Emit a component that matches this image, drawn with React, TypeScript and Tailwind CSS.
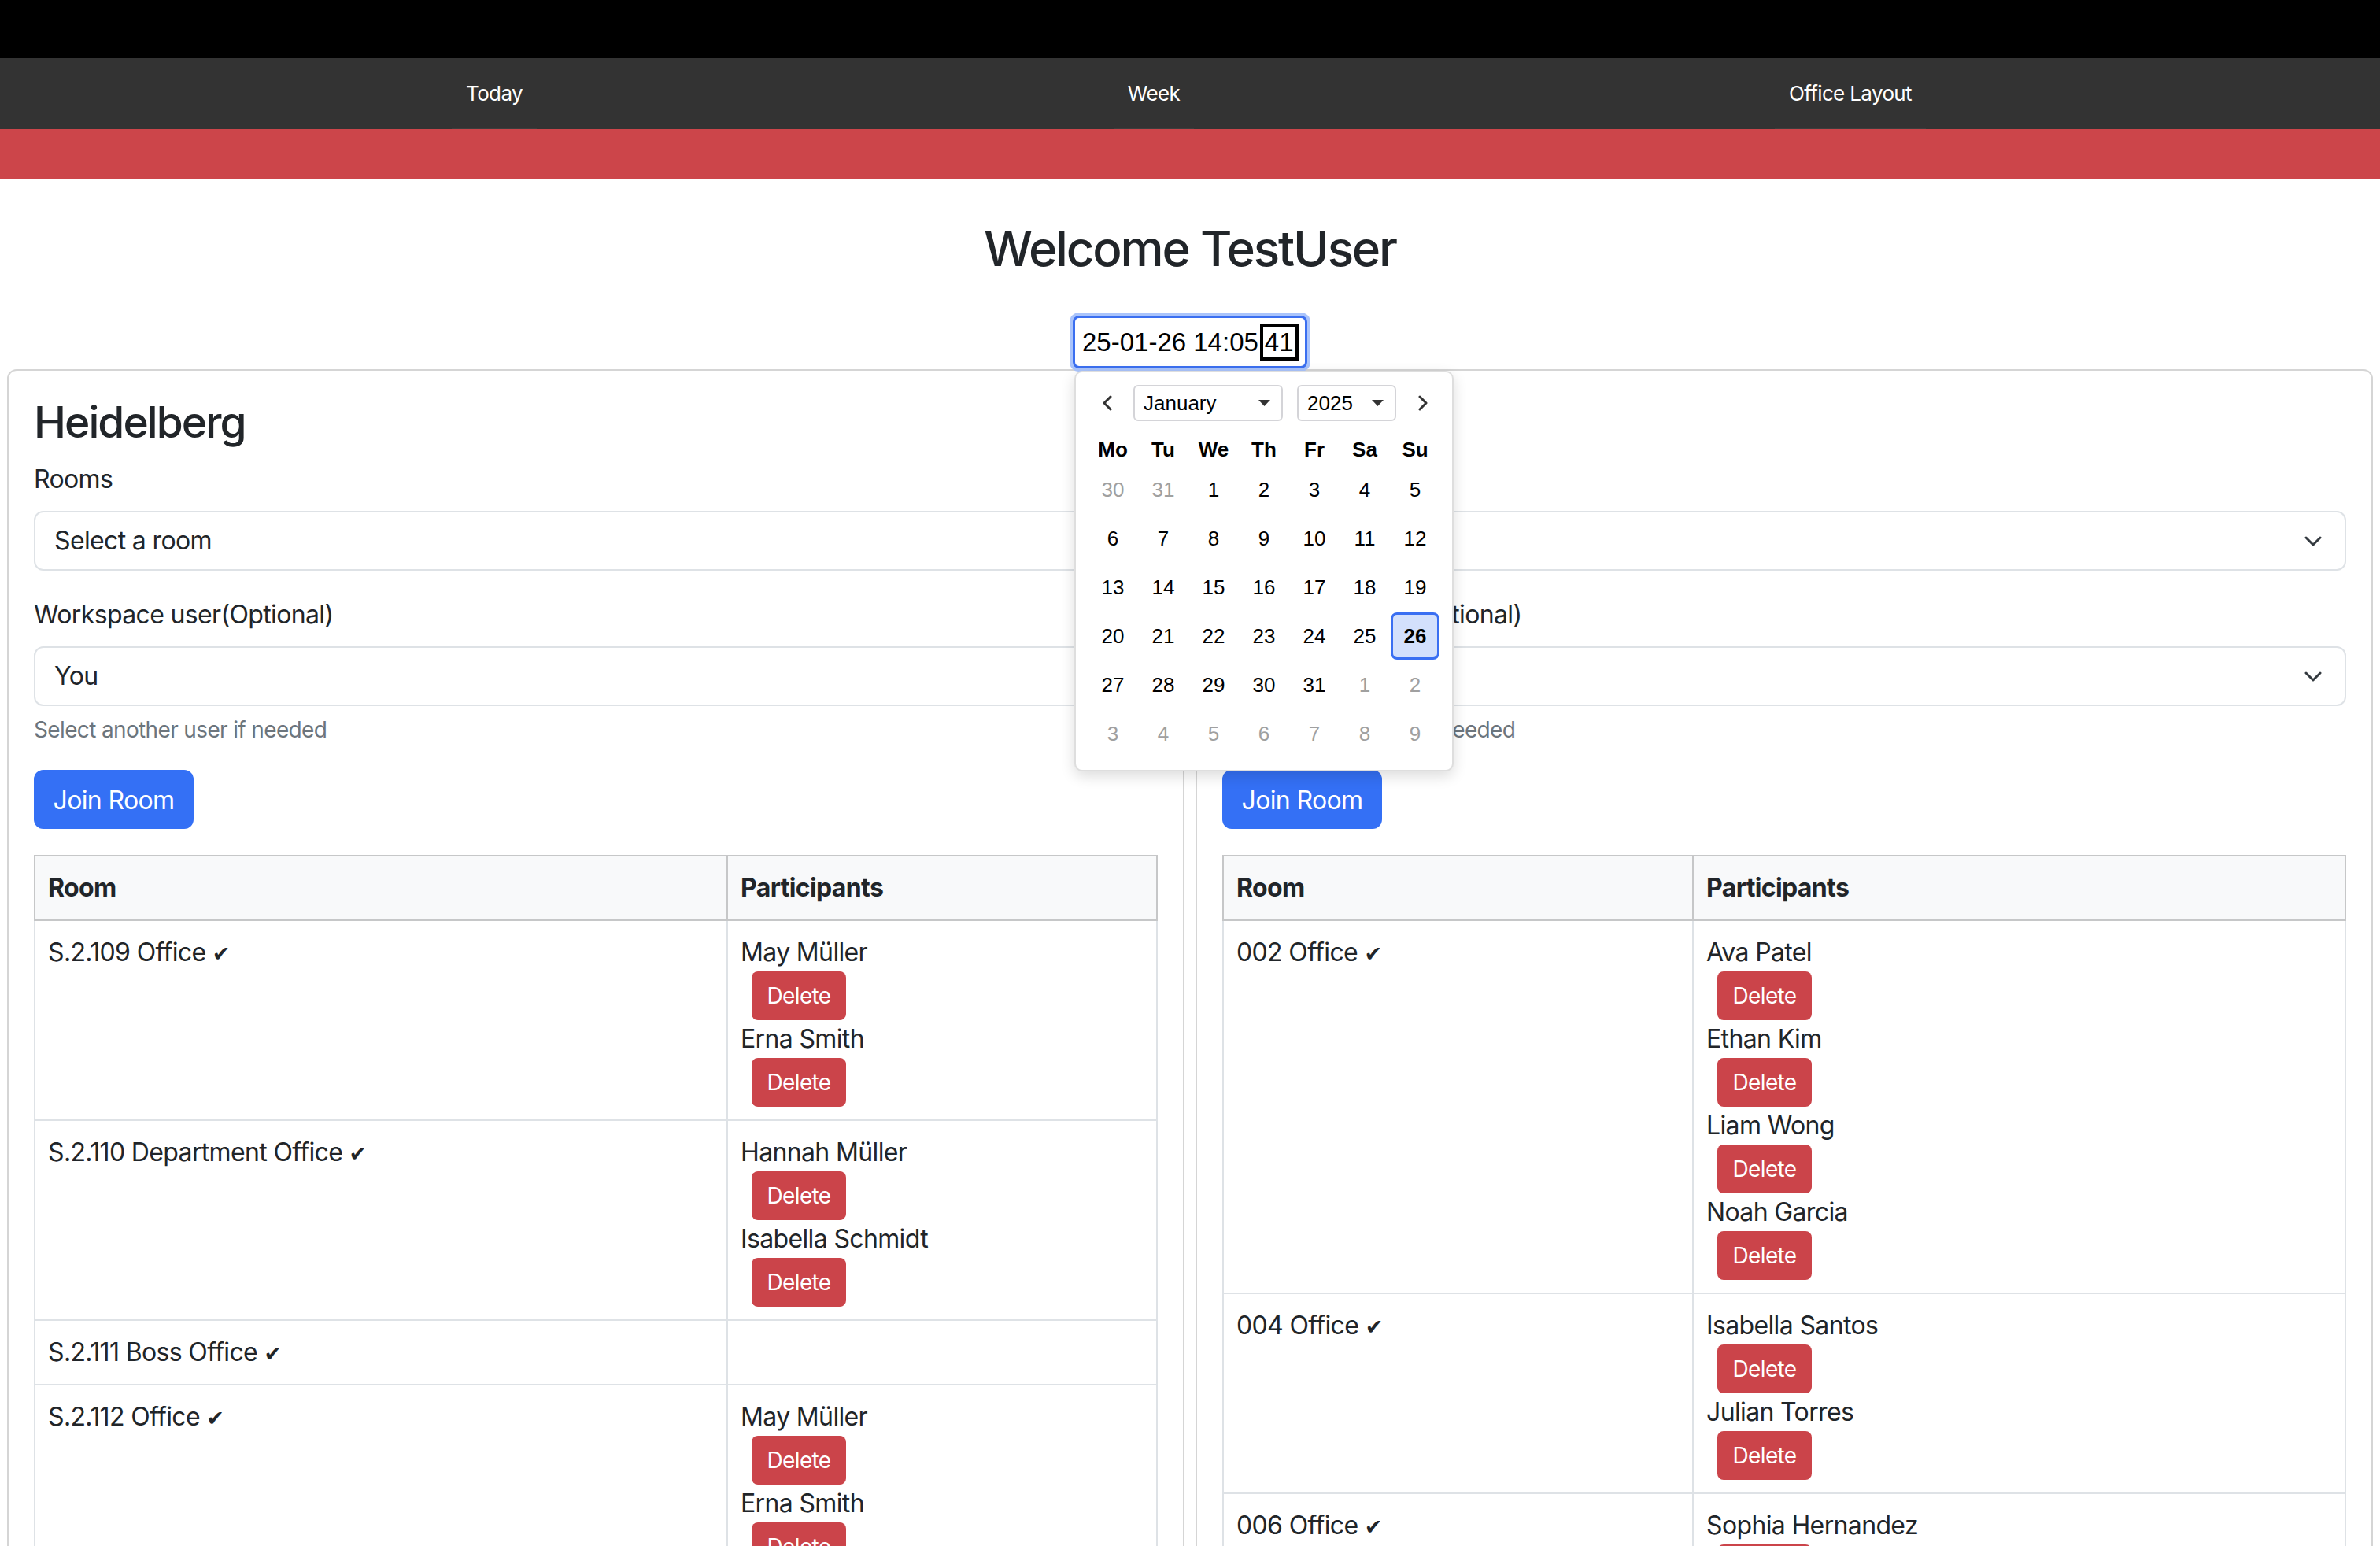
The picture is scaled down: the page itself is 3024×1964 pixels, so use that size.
import React from "react";

const NAV = ["Today", "Week", "Office Layout"];

type Row = { room: string; people: string[] };

const leftRows: Row[] = [
  { room: "S.2.109 Office", people: ["May Müller", "Erna Smith"] },
  { room: "S.2.110 Department Office", people: ["Hannah Müller", "Isabella Schmidt"] },
  { room: "S.2.111 Boss Office", people: [] },
  { room: "S.2.112 Office", people: ["May Müller", "Erna Smith"] },
];

const rightRows: Row[] = [
  { room: "002 Office", people: ["Ava Patel", "Ethan Kim", "Liam Wong", "Noah Garcia"] },
  { room: "004 Office", people: ["Isabella Santos", "Julian Torres"] },
  { room: "006 Office", people: ["Sophia Hernandez", "Olivia Brown"] },
];

function SelectChevron() {
  return (
    <svg width="22" height="13" viewBox="0 0 22 13" fill="none">
      <path d="M2 2l9 9 9-9" stroke="#343a40" strokeWidth="3" strokeLinecap="round" strokeLinejoin="round" />
    </svg>
  );
}

function FormSelect({ value }: { value: string }) {
  return (
    <div className="flex h-[76px] items-center justify-between rounded-[12px] border-2 border-[#dee2e6] bg-white pl-[24px] pr-[29px]">
      <span>{value}</span>
      <SelectChevron />
    </div>
  );
}

function RoomTable({ rows, roomColClass }: { rows: Row[]; roomColClass: string }) {
  return (
    <table className="mt-[33px] w-full table-fixed border-collapse text-left">
      <colgroup>
        <col className={roomColClass} />
        <col />
      </colgroup>
      <thead>
        <tr className="bg-[#f8f9fa]">
          <th className="border-2 border-[#c6c7c8] p-[16px] font-bold">Room</th>
          <th className="border-2 border-[#c6c7c8] p-[16px] font-bold">Participants</th>
        </tr>
      </thead>
      <tbody>
        {rows.map((r) => (
          <tr key={r.room}>
            <td className="border-2 border-[#dee2e6] p-[16px] align-top">
              {r.room} <span className="font-['DejaVu_Sans',sans-serif] text-[27px] leading-[40px]">✔</span>
            </td>
            <td className="border-2 border-[#dee2e6] p-[16px] align-top">
              {r.people.map((p, i) => (
                <div key={p + i}>
                  <div className="leading-[48px]">{p}</div>
                  <button className="ml-[14px] flex h-[62px] w-[120px] items-center justify-center rounded-[8px] bg-[#cb444a] text-[28px] text-white">
                    Delete
                  </button>
                </div>
              ))}
            </td>
          </tr>
        ))}
      </tbody>
    </table>
  );
}

function Card({ title, rows, roomColClass }: { title: string; rows: Row[]; roomColClass: string }) {
  return (
    <div className="min-w-0 flex-1 rounded-[12px] border-2 border-[#d5d5d5] p-[32px]">
      <h3 className="mb-[16px] text-[55px] font-medium leading-[66px] tracking-[-0.035em]">{title}</h3>
      <div className="mb-[16px]">Rooms</div>
      <FormSelect value="Select a room" />
      <div className="mb-[16px] mt-[32px]">Workspace user(Optional)</div>
      <FormSelect value="You" />
      <div className="mt-[9px] text-[28px] leading-[42px] text-[#6c757d]">Select another user if needed</div>
      <button className="mt-[30px] flex h-[75px] w-[203px] items-center justify-center rounded-[12px] bg-[#3470f5] pt-[2px] text-white">
        Join Room
      </button>
      <RoomTable rows={rows} roomColClass={roomColClass} />
    </div>
  );
}

function Triangle() {
  return (
    <svg width="15" height="8" viewBox="0 0 15 8">
      <polygon points="0,0 15,0 7.5,8" fill="#333" />
    </svg>
  );
}

function Arrow({ dir }: { dir: "l" | "r" }) {
  return (
    <svg width="14" height="20" viewBox="0 0 14 20" fill="none">
      <path
        d={dir === "l" ? "M11 2 L3 10 L11 18" : "M3 2 L11 10 L3 18"}
        stroke="#333"
        strokeWidth="3"
        strokeLinecap="round"
        strokeLinejoin="round"
      />
    </svg>
  );
}

const DAY_NAMES = ["Mo", "Tu", "We", "Th", "Fr", "Sa", "Su"];
const DAYS = Array.from({ length: 42 }, (_, i) => {
  const day = i < 2 ? 30 + i : i <= 32 ? i - 1 : i - 32;
  const outside = i < 2 || i > 32;
  return { day, outside, selected: i === 27 };
});

function Calendar() {
  return (
    <div className="absolute left-[2px] top-[70px] h-[509px] w-[482px] rounded-[10px] border-2 border-[#dedede] bg-white font-['Liberation_Sans',sans-serif] text-[26px] tracking-normal text-black shadow-[0_6px_18px_rgba(0,0,0,0.14)]">
      <div className="mt-[16px] flex h-[46px] items-center">
        <div className="ml-[33px] flex">
          <Arrow dir="l" />
        </div>
        <div className="ml-[26px] flex h-[46px] w-[190px] items-center justify-between rounded-[6px] border-2 border-[#d4d4d8] pl-[11px] pr-[14px]">
          <span>January</span>
          <Triangle />
        </div>
        <div className="ml-[18px] flex h-[46px] w-[126px] items-center justify-between rounded-[6px] border-2 border-[#d4d4d8] pl-[11px] pr-[14px]">
          <span>2025</span>
          <Triangle />
        </div>
        <div className="ml-[27px] flex">
          <Arrow dir="r" />
        </div>
      </div>
      <div className="ml-[15px] mt-[12px] grid h-[44px] w-[448px] grid-cols-7 items-center text-center font-bold">
        {DAY_NAMES.map((d) => (
          <div key={d}>{d}</div>
        ))}
      </div>
      <div className="ml-[15px] grid w-[448px] grid-cols-7">
        {DAYS.map((d, i) => (
          <div key={i} className="flex h-[62px] items-center justify-center">
            {d.selected ? (
              <div className="flex h-[60px] w-[62px] items-center justify-center rounded-[8px] border-[3px] border-[#3a6ff2] bg-[#d3e0fc] font-bold">
                {d.day}
              </div>
            ) : (
              <span className={d.outside ? "text-[#a0a0a0]" : "text-black"}>{d.day}</span>
            )}
          </div>
        ))}
      </div>
    </div>
  );
}

export default function App() {
  return (
    <div className="min-h-screen bg-white font-['Inter',sans-serif] text-[32px] leading-[48px] tracking-[-0.02em] text-[#212529]">
      <div className="h-[74px] bg-black" />
      <nav className="h-[90px] bg-[#333333]">
        <div className="ml-[208px] grid h-full grid-cols-[840px_836px_934px]">
          {NAV.map((n) => (
            <div key={n} className="flex h-full justify-center">
              <a className="flex h-full items-center border-b-2 border-[#3d3d3d] px-[18px] pt-[2px] text-[26px] leading-[32px] text-white">
                {n}
              </a>
            </div>
          ))}
        </div>
      </nav>
      <div className="h-[64px] bg-[#cc454a]" />
      <h2 className="mt-[49px] text-center text-[62px] font-medium leading-[77px] tracking-[-0.035em]">Welcome TestUser</h2>
      <div className="mt-[47px] flex justify-center">
        <div className="relative z-10">
          <div className="flex h-[67px] w-[298px] items-center rounded-[8px] border-[3px] border-[#3b6ff0] bg-white pl-[9px] font-['Liberation_Sans',sans-serif] text-[33px] leading-[39px] tracking-normal text-black shadow-[0_0_0_4px_#aac4fb]">
            <span>25-01-26 14:05</span>
            <span className="ml-[2px] flex h-[47px] items-center border-4 border-black px-[2px]">41</span>
          </div>
          <Calendar />
        </div>
      </div>
      <div className="mt-[1px] flex gap-[14px] px-[9px]">
        <Card title="Heidelberg" rows={leftRows} roomColClass="w-[880px]" />
        <Card title="Berlin" rows={rightRows} roomColClass="w-[597px]" />
      </div>
    </div>
  );
}
